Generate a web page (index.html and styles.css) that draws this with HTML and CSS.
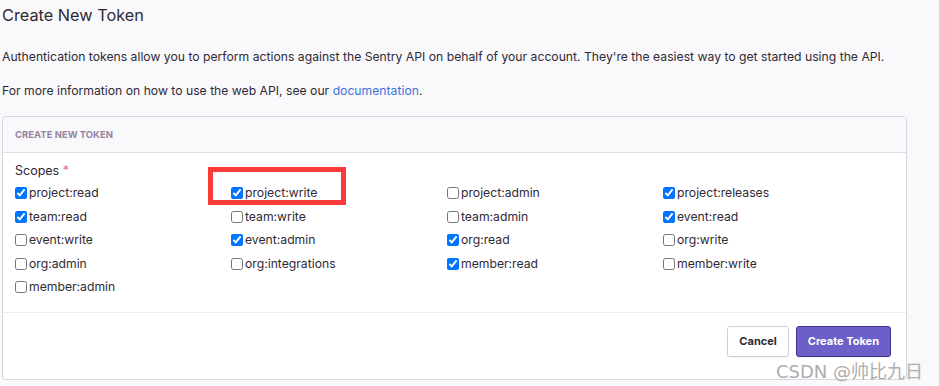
FILE: index.html
```html
<!DOCTYPE html>
<html lang="en">
<head>
  <meta charset="UTF-8" />
  <meta name="viewport" content="width=device-width, initial-scale=1.0" />
  <title>Create New Token</title>
  <link rel="stylesheet" href="styles.css">
</head>
<body>

<div class="page">
  <h1 class="page-title">Create New Token</h1>
  <p class="intro">Authentication tokens allow you to perform actions against the Sentry API on behalf of your account. They're the easiest way to get started using the API.</p>
  <p class="intro">For more information on how to use the web API, see our <a href="#">documentation</a>.</p>

  <div class="panel">
    <div class="panel-header">Create New Token</div>

    <div class="panel-body">
      <div class="field-label">Scopes <span class="required">*</span></div>
      <div class="scopes">
        <label class="scope"><input type="checkbox" checked> project:read</label>
        <label class="scope highlighted"><input type="checkbox" checked> project:write</label>
        <label class="scope"><input type="checkbox"> project:admin</label>
        <label class="scope"><input type="checkbox" checked> project:releases</label>

        <label class="scope"><input type="checkbox" checked> team:read</label>
        <label class="scope"><input type="checkbox"> team:write</label>
        <label class="scope"><input type="checkbox"> team:admin</label>
        <label class="scope"><input type="checkbox" checked> event:read</label>

        <label class="scope"><input type="checkbox"> event:write</label>
        <label class="scope"><input type="checkbox" checked> event:admin</label>
        <label class="scope"><input type="checkbox" checked> org:read</label>
        <label class="scope"><input type="checkbox"> org:write</label>

        <label class="scope"><input type="checkbox"> org:admin</label>
        <label class="scope"><input type="checkbox"> org:integrations</label>
        <label class="scope"><input type="checkbox" checked> member:read</label>
        <label class="scope"><input type="checkbox"> member:write</label>

        <label class="scope"><input type="checkbox"> member:admin</label>
      </div>
    </div>

    <div class="panel-footer">
      <button class="btn">Cancel</button>
      <button class="btn btn-primary">Create Token</button>
    </div>
  </div>
</div>

<div class="watermark">CSDN @帅比九日</div>

</body>
</html>
```

FILE: styles.css
```css
body {
  font-family: Inter, "Noto Sans", sans-serif;
  background-color: #f9f9fb;
  color: #2f2936;
  margin: 0;
  padding: 0;
}

.page {
  padding: 5px 32px 0 2px;
}

.page-title {
  font-size: 16.3px;
  font-weight: 400;
  margin: 0 0 24px;
  line-height: 20px;
}

.intro {
  font-size: 12.2px;
  line-height: 16px;
  margin: 0 0 18px;
}

.intro a {
  color: #3d74db;
  text-decoration: none;
}

.panel {
  background: white;
  border: 1px solid #dcd6e2;
  border-radius: 4px;
  box-shadow: 0 1px 2px rgba(0,0,0,0.06);
  margin-top: -1px;
}

.panel-header {
  background: #f9f9fb;
  border-bottom: 1px solid #e2dde7;
  border-radius: 4px 4px 0 0;
  padding: 11px 12px;
  font-size: 9.5px;
  font-weight: 700;
  text-transform: uppercase;
  color: #9585a3;
  line-height: 13px;
}

.panel-body {
  padding: 10px 12px 16px;
  border-bottom: 1px solid #eeebf1;
}

.field-label {
  font-size: 12.5px;
  line-height: 16px;
  margin-bottom: 6px;
}

.required {
  color: #f36e6e;
}

.scopes {
  display: grid;
  grid-template-columns: repeat(4, 216px);
  row-gap: 7px;
}

.scope {
  display: flex;
  align-items: center;
  font-size: 12.2px;
  line-height: 16.5px;
  position: relative;
}

.scope input {
  width: 12px;
  height: 12px;
  margin: 0 2px 0 0;
}

.highlighted::after {
  content: "";
  position: absolute;
  left: -23px;
  top: -18px;
  width: 128px;
  height: 28px;
  border: 5px solid #fb3a3a;
}

.panel-footer {
  display: flex;
  justify-content: flex-end;
  gap: 7px;
  padding: 13px 15px 22px;
}

.btn {
  font-family: inherit;
  font-size: 11px;
  font-weight: 700;
  height: 31px;
  padding: 0 11px;
  background: white;
  color: #2f2936;
  border: 1px solid #d5cfdc;
  border-radius: 3px;
  box-shadow: 0 1px 2px rgba(0,0,0,0.05);
  cursor: pointer;
}

.btn-primary {
  background: #6c5fc7;
  border-color: #3f3394;
  color: white;
}

.watermark {
  position: absolute;
  left: 776px;
  top: 357px;
  font-family: "DejaVu Sans", "Noto Sans CJK SC", sans-serif;
  font-size: 18px;
  color: #a6a6a6;
  opacity: 0.9;
}
```
